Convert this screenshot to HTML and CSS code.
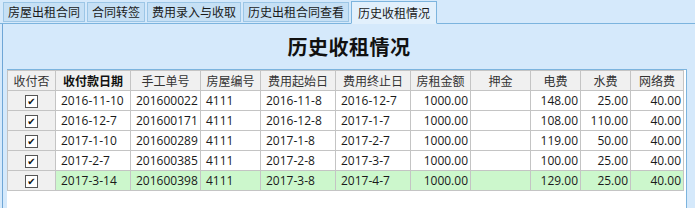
FILE: index.html
```html
<!doctype html>
<html>
<head>
<meta charset="UTF-8">
<title>历史收租情况</title>
<link rel="stylesheet" href="styles.css">
</head>
<body>
<div class="tabs">
	<div class="tab">房屋出租合同</div>
	<div class="tab">合同转签</div>
	<div class="tab">费用录入与收取</div>
	<div class="tab">历史出租合同查看</div>
	<div class="tab active">历史收租情况</div>
</div>

<div class="panel">
	<h1 class="title">历史收租情况</h1>

	<div class="grid">
		<table>
			<colgroup>
				<col style="width:48px"><col style="width:75px"><col style="width:70px"><col style="width:60px">
				<col style="width:75px"><col style="width:75px"><col style="width:60px"><col style="width:60px">
				<col style="width:50px"><col style="width:50px"><col style="width:53px">
			</colgroup>
			<thead>
				<tr>
					<th>收付否</th>
					<th class="strong">收付款日期</th>
					<th>手工单号</th>
					<th>房屋编号</th>
					<th>费用起始日</th>
					<th>费用终止日</th>
					<th>房租金额</th>
					<th>押金</th>
					<th>电费</th>
					<th>水费</th>
					<th>网络费</th>
				</tr>
			</thead>
			<tbody>
				<tr>
					<td class="chk"><span class="box">✔</span></td>
					<td>2016-11-10</td><td>201600022</td><td>4111</td><td>2016-11-8</td><td>2016-12-7</td>
					<td class="r">1000.00</td><td></td><td class="r">148.00</td><td class="r">25.00</td><td class="r">40.00</td>
				</tr>
				<tr>
					<td class="chk"><span class="box">✔</span></td>
					<td>2016-12-7</td><td>201600171</td><td>4111</td><td>2016-12-8</td><td>2017-1-7</td>
					<td class="r">1000.00</td><td></td><td class="r">108.00</td><td class="r">110.00</td><td class="r">40.00</td>
				</tr>
				<tr>
					<td class="chk"><span class="box">✔</span></td>
					<td>2017-1-10</td><td>201600289</td><td>4111</td><td>2017-1-8</td><td>2017-2-7</td>
					<td class="r">1000.00</td><td></td><td class="r">119.00</td><td class="r">50.00</td><td class="r">40.00</td>
				</tr>
				<tr>
					<td class="chk"><span class="box">✔</span></td>
					<td>2017-2-7</td><td>201600385</td><td>4111</td><td>2017-2-8</td><td>2017-3-7</td>
					<td class="r">1000.00</td><td></td><td class="r">100.00</td><td class="r">25.00</td><td class="r">40.00</td>
				</tr>
				<tr class="sel">
					<td class="chk"><span class="box">✔</span></td>
					<td>2017-3-14</td><td>201600398</td><td>4111</td><td>2017-3-8</td><td>2017-4-7</td>
					<td class="r">1000.00</td><td></td><td class="r">129.00</td><td class="r">25.00</td><td class="r">40.00</td>
				</tr>
			</tbody>
		</table>
	</div>
</div>
</body>
</html>
```

FILE: styles.css
```css
html, body {
	margin: 0;
	height: 100%;
}

body {
	display: flex;
	flex-direction: column;
	background: #d5e9fb;
	font-family: "Noto Sans CJK SC", "Open Sans", sans-serif;
	font-size: 12px;
	color: #1a1a1a;
	overflow: hidden;
}

.tabs {
	display: flex;
	align-items: flex-end;
	gap: 2px;
	flex: none;
	height: 23px;
	padding-left: 3px;
	border-bottom: 1px solid #7cb4de;
}

.tab {
	height: 18px;
	line-height: 18px;
	padding: 0 4px;
	margin-bottom: 1px;
	background: #c6e0f5;
	border: 1px solid #9cc6e6;
	white-space: nowrap;
}

.tab.active {
	height: 21px;
	line-height: 22px;
	padding: 0 6px;
	margin-bottom: -1px;
	background: #e2f0fc;
	border-color: #7cb4de;
	border-bottom: 1px solid #e2f0fc;
}

.panel {
	display: flex;
	flex-direction: column;
	flex: 1;
	min-height: 0;
	margin-left: 2px;
	border-left: 1px solid #6fa6d6;
}

.title {
	flex: none;
	margin: 0;
	height: 45px;
	line-height: 45px;
	text-align: center;
	font-size: 20px;
	font-weight: bold;
	color: #111;
	letter-spacing: 0.5px;
}

.grid {
	flex: 1;
	margin-left: 4px;
	width: 679px;
	background: #fff;
	border-top: 1px solid #7cb4de;
	border-right: 1px solid #7cb4de;
}

table {
	border-collapse: collapse;
	table-layout: fixed;
	width: 676px;
}

th, td {
	height: 19px;
	padding: 0 3px 0 5px;
	border: 1px solid #c4c4c4;
	white-space: nowrap;
	font-family: "Open Sans", "Noto Sans CJK SC", sans-serif;
	font-size: 12px;
	line-height: 18px;
}

th {
	padding: 0 3px;
	background: #f0f0f0;
	font-family: "Noto Sans CJK SC", sans-serif;
	font-weight: normal;
	color: #333;
	text-align: center;
}

th.strong {
	font-weight: bold;
	color: #111;
}

td {
	color: #1a1a1a;
	text-align: left;
}

td.r {
	padding-right: 2px;
	text-align: right;
}

td.chk {
	padding: 0;
	background: #f0f0f0;
	text-align: center;
}

.box {
	display: inline-block;
	width: 11px;
	height: 11px;
	line-height: 11px;
	border: 1px solid #555;
	background: #fff;
	font-family: "DejaVu Sans", sans-serif;
	font-size: 10px;
	font-weight: bold;
	color: #111;
	vertical-align: middle;
	text-align: center;
}

tr.sel td {
	background: #ccf7cc;
}

tr.sel td.chk {
	background: #f0f0f0;
}
```
